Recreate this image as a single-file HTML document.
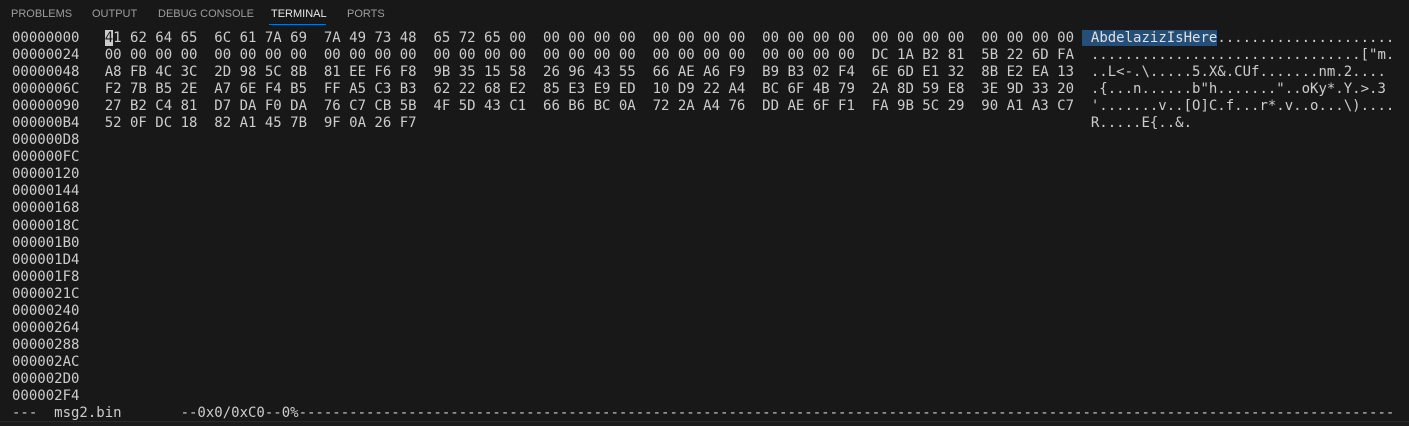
<!DOCTYPE html>
<html><head><meta charset="utf-8"><style>
html,body{margin:0;padding:0;background:#181818;width:1409px;height:425px;overflow:hidden}
.tabs{position:absolute;top:0;left:0;height:28px;font-family:"Liberation Sans",sans-serif;font-size:11px;color:#9d9d9d}
.tab{position:absolute;top:8px;white-space:nowrap}
.act{color:#e7e7e7}
.ul{position:absolute;left:269px;top:24px;width:57px;height:1px;background:#0078d4}
pre{position:absolute;left:12px;top:30px;margin:0;font-family:"DejaVu Sans Mono","Liberation Mono",monospace;font-size:14px;line-height:17.05px;color:#cccccc}
.cur{background:#cccccc;color:#181818}
.sel{background:#264f78;color:#e0e0e0}
.bot{position:absolute;left:0;top:421px;width:1409px;height:4px;background:#1c1c1c;border-top:1px solid #2b2b2b}
</style></head><body>
<div class="tabs">
<span class="tab" style="left:11px">PROBLEMS</span>
<span class="tab" style="left:92px">OUTPUT</span>
<span class="tab" style="left:158px">DEBUG CONSOLE</span>
<span class="tab act" style="left:271px">TERMINAL</span>
<span class="tab" style="left:347px">PORTS</span>
<div class="ul"></div>
</div>
<pre>00000000   <span class="cur">4</span>1 62 64 65  6C 61 7A 69  7A 49 73 48  65 72 65 00  00 00 00 00  00 00 00 00  00 00 00 00  00 00 00 00  00 00 00 00 <span class="sel"> AbdelazizIsHere</span>.....................
00000024   00 00 00 00  00 00 00 00  00 00 00 00  00 00 00 00  00 00 00 00  00 00 00 00  00 00 00 00  DC 1A B2 81  5B 22 6D FA  ................................["m.
00000048   A8 FB 4C 3C  2D 98 5C 8B  81 EE F6 F8  9B 35 15 58  26 96 43 55  66 AE A6 F9  B9 B3 02 F4  6E 6D E1 32  8B E2 EA 13  ..L&lt;-.\.....5.X&amp;.CUf.......nm.2....
0000006C   F2 7B B5 2E  A7 6E F4 B5  FF A5 C3 B3  62 22 68 E2  85 E3 E9 ED  10 D9 22 A4  BC 6F 4B 79  2A 8D 59 E8  3E 9D 33 20  .{...n......b"h......."..oKy*.Y.&gt;.3 
00000090   27 B2 C4 81  D7 DA F0 DA  76 C7 CB 5B  4F 5D 43 C1  66 B6 BC 0A  72 2A A4 76  DD AE 6F F1  FA 9B 5C 29  90 A1 A3 C7  '.......v..[O]C.f...r*.v..o...\)....
000000B4   52 0F DC 18  82 A1 45 7B  9F 0A 26 F7                                                                                R.....E{..&amp;.
000000D8
000000FC
00000120
00000144
00000168
0000018C
000001B0
000001D4
000001F8
0000021C
00000240
00000264
00000288
000002AC
000002D0
000002F4
---  msg2.bin       --0x0/0xC0--0%----------------------------------------------------------------------------------------------------------------------------------</pre>
<div class="bot"></div>
</body></html>
